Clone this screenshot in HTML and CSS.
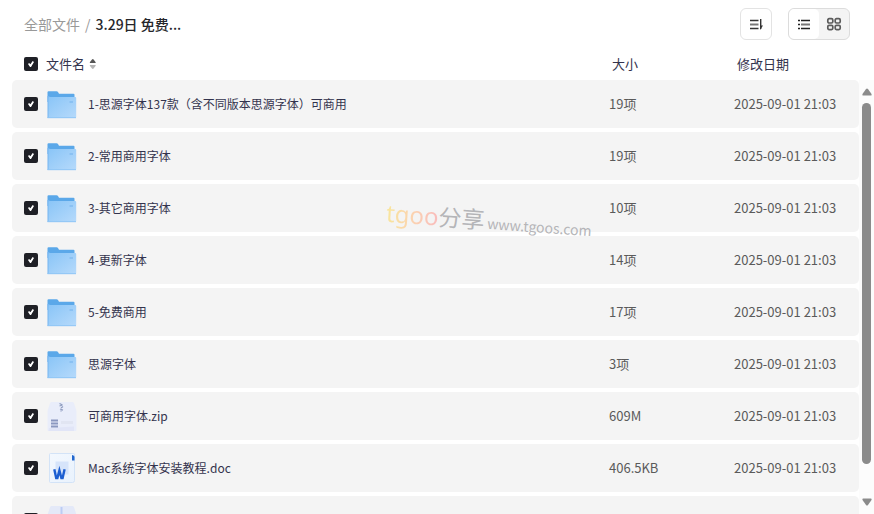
FILE: index.html
```html
<!DOCTYPE html>
<html lang="zh-CN">
<head>
<meta charset="utf-8">
<title>全部文件</title>
<link rel="stylesheet" href="styles.css">
</head>
<body>
<svg class="defs" aria-hidden="true">
  <defs>
    <linearGradient id="folderFront" x1="0" y1="0" x2="1" y2="1">
      <stop offset="0" stop-color="#8ac5f7"/><stop offset="1" stop-color="#b6dafb"/>
    </linearGradient>
    <linearGradient id="paper" x1="0" y1="0" x2="1" y2="1">
      <stop offset="0" stop-color="#f3f8fe"/><stop offset="1" stop-color="#e9f2fd"/>
    </linearGradient>
  </defs>
  <symbol id="folder" viewBox="0 0 32 32">
    <path d="M1.500 4.300q0-1 1-1h8q1 0 1.500.8l1 1.700h14.500q1 0 1 1V14H1.500z" fill="#5ba8e9"/>
    <path d="M1.500 8h2v22h-2z" fill="#74b5f1"/>
    <path d="M2.500 9.700q0-.7.700-.7h26q1 0 1 1v19q0 1-1 1H2.500z" fill="url(#folderFront)"/>
    <path d="M1.500 29.700h28.500" stroke="#8fc5f6"/>
    <path d="M23.500 14h3.500" stroke="#83bdf0" stroke-width="1.500"/>
  </symbol>
  <symbol id="zip" viewBox="0 0 32 32">
    <path d="M5.500 2h21q1 0 1.600 1.400l2.400 7.600v19q0 1-1 1h-27q-1 0-1-1V11l2.400-7.600Q4.500 2 5.500 2z" fill="#e9edfa"/>
    <path d="M3 28L28 26.500V31H2.500z" fill="#e1e5f7"/>
    <path d="M13.500 3.500l3 1.500M13.500 6l3-1M15 8l2-1.500M14 9l3 1M14.500 11.300l2-1.300" stroke="#8f9dc0" stroke-width="1.300" fill="none"/>
    <path d="M5 20.500h7M5 23.500h7M5 26.500h7" stroke="#8b98c0" stroke-width="2"/>
    <path d="M15 22.500h12" stroke="#e1e5f2" stroke-width="3"/>
  </symbol>
  <symbol id="package" viewBox="0 0 32 32">
    <path d="M5.500 2h21q1 0 1.600 1.400l2.400 7.600v20h-29V11l2.400-7.600Q4.500 2 5.500 2z" fill="#e4e9f8"/>
    <path d="M15.500 3v13" stroke="#bcccf4" stroke-width="2"/>
  </symbol>
  <symbol id="word" viewBox="0 0 32 32">
    <path d="M4.500 1.500h23q1 0 1 1v26q0 2-2 2h-22q-1 0-1-1v-27q0-1 1-1z" fill="url(#paper)" stroke="#d3e3f7"/>
    <path d="M26 3v5.500h2.500V5q0-1-1-1.500z" fill="#2367cd"/>
    <path d="M9.500 9.500h13v13h-13z" fill="#d6e4fa"/>
    <path d="M8.300 17.300l1.900 8.700h1.200l2-7.500 2 7.500h1.200l2-8.700" fill="none" stroke="#1d5fd1" stroke-width="2.400"/>
  </symbol>
</svg>

<div class="app">
  <header class="toolbar">
    <nav class="crumbs" aria-label="路径">
      <a href="#">全部文件</a><span class="slash">/</span><strong>3.29日 免费...</strong>
    </nav>
    <button class="sort-button" type="button" aria-label="排序">
      <svg width="16" height="16" viewBox="0 0 16 16" fill="none" stroke="#333">
        <path d="M2 4.500h8.500M2 12.500h8.500" stroke-width="1.300"/><path d="M2 8.500h8.500" stroke="#777" stroke-width="2"/>
        <path d="M12.700 3v10" stroke-width="1.400"/><path d="M12 14v-4.500h3z" fill="#333" stroke="none"/>
      </svg>
    </button>
    <div class="view-switch">
      <button class="active" type="button" aria-label="列表">
        <svg width="14" height="14" viewBox="0 0 14 14" fill="none" stroke="#222">
          <path d="M1 3.500h2M4 3.500h9M1 11.500h2M4 11.500h9M1 7.500h2" stroke-width="1.300"/><path d="M4 7.500h9" stroke="#777" stroke-width="2"/>
        </svg>
      </button>
      <button type="button" aria-label="网格">
        <svg width="16" height="16" viewBox="0 0 16 16" fill="none" stroke="#5c5c5c" stroke-width="1.700">
          <rect x="1.800" y="2.700" width="5" height="4.300" rx="1.300"/><rect x="9.200" y="2.700" width="5" height="4.300" rx="1.300"/>
          <rect x="1.800" y="9.300" width="5" height="4.300" rx="1.300"/><rect x="9.200" y="9.300" width="5" height="4.300" rx="1.300"/>
        </svg>
      </button>
    </div>
  </header>

  <main class="browser">
    <div class="files">
      <table>
        <colgroup><col class="col-check"><col><col class="col-size"><col class="col-date"></colgroup>
        <thead>
          <tr>
            <th class="check"><input type="checkbox" aria-label="全选" checked></th>
            <th><span class="sortable">文件名
              <svg width="8" height="12" viewBox="0 0 8 12"><path d="M1 5q-.5-.5 0-1l2-2.500q.8-.8 1.600 0L6.500 4q.5.500 0 1z" fill="#555"/><path d="M1 7q-.5.500 0 1l2 2.500q.8.800 1.600 0L6.500 8q.5-.5 0-1z" fill="#b5b5b5"/></svg></span></th>
            <th class="offset">大小</th>
            <th class="offset">修改日期</th>
          </tr>
        </thead>
        <tbody>
          <tr><td class="check"><input type="checkbox" id="f1" checked></td><td><label class="name" for="f1"><svg class="icon"><use href="#folder"/></svg>1-思源字体137款（含不同版本思源字体）可商用</label></td><td class="meta">19项</td><td class="meta">2025-09-01 21:03</td></tr>
          <tr><td class="check"><input type="checkbox" id="f2" checked></td><td><label class="name" for="f2"><svg class="icon"><use href="#folder"/></svg>2-常用商用字体</label></td><td class="meta">19项</td><td class="meta">2025-09-01 21:03</td></tr>
          <tr><td class="check"><input type="checkbox" id="f3" checked></td><td><label class="name" for="f3"><svg class="icon"><use href="#folder"/></svg>3-其它商用字体</label></td><td class="meta">10项</td><td class="meta">2025-09-01 21:03</td></tr>
          <tr><td class="check"><input type="checkbox" id="f4" checked></td><td><label class="name" for="f4"><svg class="icon"><use href="#folder"/></svg>4-更新字体</label></td><td class="meta">14项</td><td class="meta">2025-09-01 21:03</td></tr>
          <tr><td class="check"><input type="checkbox" id="f5" checked></td><td><label class="name" for="f5"><svg class="icon"><use href="#folder"/></svg>5-免费商用</label></td><td class="meta">17项</td><td class="meta">2025-09-01 21:03</td></tr>
          <tr><td class="check"><input type="checkbox" id="f6" checked></td><td><label class="name" for="f6"><svg class="icon"><use href="#folder"/></svg>思源字体</label></td><td class="meta">3项</td><td class="meta">2025-09-01 21:03</td></tr>
          <tr><td class="check"><input type="checkbox" id="f7" checked></td><td><label class="name" for="f7"><svg class="icon"><use href="#zip"/></svg>可商用字体.zip</label></td><td class="meta">609M</td><td class="meta">2025-09-01 21:03</td></tr>
          <tr><td class="check"><input type="checkbox" id="f8" checked></td><td><label class="name" for="f8"><svg class="icon"><use href="#word"/></svg>Mac系统字体安装教程.doc</label></td><td class="meta">406.5KB</td><td class="meta">2025-09-01 21:03</td></tr>
          <tr><td class="check"><input type="checkbox" aria-label="选择" checked></td><td><span class="name"><svg class="icon"><use href="#package"/></svg></span></td><td></td><td></td></tr>
        </tbody>
      </table>
    </div>
    <div class="scrollbar" aria-hidden="true">
      <svg width="10" height="8" viewBox="0 0 10 8"><path d="M4 1q1-1 2 0l3.500 5q.5 1.500-.5 1.500H1Q0 7.500.500 6z" fill="#8b8b8b"/></svg>
      <div class="track"><div class="thumb"></div></div>
      <svg width="10" height="8" viewBox="0 0 10 8"><path d="M4 7q1 1 2 0l3.500-5Q10 .5 9 .5H1Q0 .5.500 2z" fill="#8b8b8b"/></svg>
    </div>
  </main>
  <div class="watermark"><span class="brand">tgoo</span><span class="share">分享</span><span class="site">www.tgoos.com</span></div>
</div>
</body>
</html>
```
FILE: styles.css
```css
* { box-sizing: border-box; }

body {
  margin: 0;
  background: #fff;
  color: #33334d;
  font: 13px/20px "Noto Sans CJK SC", "Noto Sans", sans-serif;
}

button { padding: 0; border: 0; background: none; font: inherit; }
.defs { position: absolute; width: 0; height: 0; }

.app {
  position: relative;
  display: flex;
  flex-direction: column;
  height: 100vh;
  overflow: hidden;
}

.toolbar {
  display: flex;
  flex: none;
  align-items: center;
  gap: 16px;
  height: 48px;
  padding: 0 24px;
}

.crumbs { flex: 1; font-size: 14px; white-space: nowrap; }
.crumbs a { color: #999; text-decoration: none; }
.crumbs .slash { margin: 0 5px; color: #999; }
.crumbs strong { color: #25262b; font-weight: 500; }

.sort-button,
.view-switch {
  display: flex;
  align-items: center;
  justify-content: center;
  height: 32px;
  border: 1px solid #e3e3e3;
  border-radius: 6px;
}
.sort-button { width: 32px; }
.view-switch { overflow: hidden; background: #f4f4f4; border-color: #dcdcdc; }
.view-switch button {
  display: flex;
  align-items: center;
  justify-content: center;
  width: 30px;
  height: 30px;
}
.view-switch .active { border-radius: 5px; background: #fff; }

.browser { display: flex; flex: 1; min-height: 0; }
.files { flex: 1; min-width: 0; overflow: hidden; padding-left: 12px; }

table {
  width: 100%;
  table-layout: fixed;
  border-collapse: separate;
  border-spacing: 0 4px;
}
.col-check { width: 34px; }
.col-size, .col-date { width: 125px; }

th { height: 24px; padding: 0; font-weight: 400; text-align: left; }
th.offset { padding-left: 3px; }
.sortable { display: flex; align-items: center; gap: 4px; }

td { height: 48px; padding: 0; background: #f4f4f4; }
td:first-child { border-radius: 5px 0 0 5px; }
td:last-child { border-radius: 0 5px 5px 0; }
.check { padding-left: 12px; }
.meta { color: #5a5a5a; }

.name { display: flex; align-items: center; gap: 10px; font-size: 12px; }
.icon { flex: none; width: 32px; height: 32px; }

input[type="checkbox"] {
  appearance: none;
  display: grid;
  place-items: center;
  width: 14px;
  height: 14px;
  margin: 0;
  border-radius: 2px;
  background: #1f2026;
}
input[type="checkbox"]:checked::before {
  content: "";
  width: 6px;
  height: 6px;
  background: #fff;
  clip-path: polygon(0% 48%, 18% 34%, 40% 55%, 78% 0%, 100% 16%, 50% 98%, 34% 98%);
}

.scrollbar {
  display: flex;
  flex-direction: column;
  align-items: center;
  gap: 7px;
  width: 15px;
  margin-top: 32px;
  padding: 8px 0;
  background: #fcfcfc;
}
.track { flex: 1; width: 9px; }
.thumb { height: 93%; border-radius: 5px; background: #8b8b8b; }
.scrollbar svg { flex: none; }

.watermark {
  position: absolute;
  top: 203px;
  left: 386px;
  display: flex;
  align-items: baseline;
  line-height: 32px;
  white-space: nowrap;
  color: #b4b5b8;
  transform: rotate(4deg);
  pointer-events: none;
}
.brand {
  font: 24px/32px "Noto Sans", sans-serif;
  color: transparent;
  background: linear-gradient(90deg, #f8e69b, #fbd3b0 50%, #f9bcbc);
  background-clip: text;
}
.share { font-size: 23px; }
.site { margin-left: 3px; font-size: 14px; }
```
